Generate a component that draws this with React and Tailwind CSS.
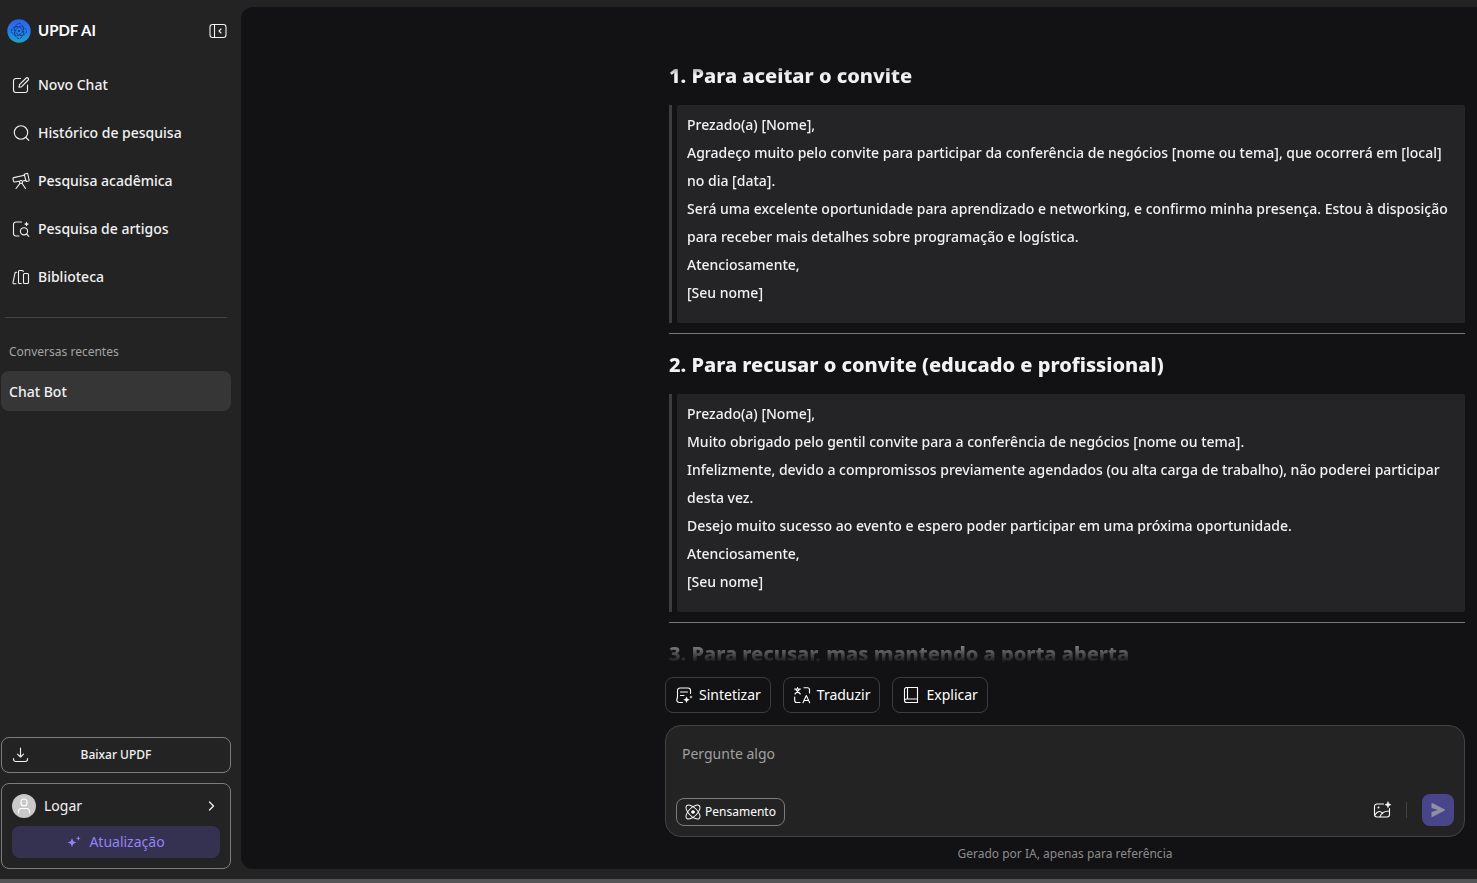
const base = {
  fill: "none",
  stroke: "currentColor",
  strokeWidth: 1.1,
  strokeLinecap: "round",
  strokeLinejoin: "round",
  "aria-hidden": true
};

function Icon({ className = "size-[18px]", children }) {
  return (
    <svg viewBox="0 0 18 18" className={`shrink-0 ${className}`} {...base}>
      {children}
    </svg>
  );
}

function LogoIcon() {
  return (
    <svg viewBox="0 0 24 24" className="size-6 shrink-0" aria-hidden="true">
      <defs>
        <linearGradient id="logo" x1="0.5" y1="0" x2="0.5" y2="1">
          <stop offset="0" stopColor="#2f5fee" />
          <stop offset="0.55" stopColor="#2280ea" />
          <stop offset="1" stopColor="#1fa3c4" />
        </linearGradient>
      </defs>
      <circle cx="12" cy="12" r="11.7" fill="url(#logo)" />
      <g fill="none" stroke="#0b2a6b" strokeWidth="0.8" strokeDasharray="2.4 0.8">
        <ellipse cx="12" cy="12" rx="7.6" ry="4.6" />
        <ellipse cx="12" cy="12" rx="4.6" ry="7.6" />
        <circle cx="12" cy="12" r="3.4" />
      </g>
      <circle cx="12" cy="12" r="0.9" fill="#0b2a6b" />
    </svg>
  );
}

function CollapseIcon() {
  return (
    <Icon>
      <rect x="1" y="2.5" width="16" height="13" rx="2.5" />
      <path d="M5.5 2.5v13M12 7l-2 2 2 2" />
    </Icon>
  );
}

function NewChatIcon() {
  return (
    <Icon>
      <path d="M8.5 2.5H4A2.500 2.500 0 0 0 1.500 5v9A2.500 2.500 0 0 0 4 16.500h9a2.500 2.500 0 0 0 2.500-2.500V9" />
      <path d="M7 11.300l.5-2.700 6.700-6.600a1.200 1.200 0 0 1 1.700 0l.3.3a1.200 1.200 0 0 1 0 1.700L9.700 10.700z" />
    </Icon>
  );
}

function SearchIcon() {
  return (
    <Icon>
      <circle cx="9" cy="8.500" r="6.700" />
      <path d="M14 13.500l2.800 2.800" />
    </Icon>
  );
}

function TelescopeIcon() {
  return (
    <Icon>
      <path d="M12.200 2.300l2.600-.9a.8.8 0 0 1 1 .6l1.300 6a.8.8 0 0 1-.6 1l-2.400.4z" />
      <path d="M12.400 3.300L1.700 5.600a1 1 0 0 0-.7 1.200l.6 2.500a1 1 0 0 0 1.200.7L7 9.200M11 9l2.800-.6" />
      <circle cx="9" cy="10" r="1.500" />
      <path d="M8 11.300L4 16.500M10 11.300l3.500 5.200" />
    </Icon>
  );
}

function ArticleSearchIcon() {
  return (
    <Icon>
      <path d="M9.500 2H4A2.500 2.500 0 0 0 1.500 4.500v9A2.500 2.500 0 0 0 4 16H7" />
      <circle cx="12" cy="11.300" r="3.600" />
      <path d="M14.600 14l2.200 2.300" />
      <path d="M14.500 1.600l.8 1.700 1.800.8-1.800.8-.8 1.700-.8-1.700-1.700-.8 1.700-.8z" fill="currentColor" stroke="none" />
    </Icon>
  );
}

function LibraryIcon() {
  return (
    <Icon>
      <path d="M4.700 4.300H4a1 1 0 0 0-1 .8L1 14.500a1 1 0 0 0 1 1.200h2" />
      <path d="M9.300 15.500H7.500a1 1 0 0 1-1-1V3.500a1 1 0 0 1 1-1h2.800a1 1 0 0 1 1 1" />
      <rect x="11.500" y="5.500" width="5" height="10" rx="1" />
    </Icon>
  );
}

function DownloadIcon() {
  return (
    <Icon>
      <path d="M8.500 2v9M5.500 8.200l3 2.800 3-2.800M1.500 12.500v.8a2.200 2.200 0 0 0 2.200 2.200h9.600a2.200 2.200 0 0 0 2.200-2.200v-.8" />
    </Icon>
  );
}

function SummaryIcon() {
  return (
    <Icon>
      <path d="M7.500 16.500H4.500A2.800 2.800 0 0 1 1.700 14l.8-3V4.500A2.500 2.500 0 0 1 5 2h8a2.500 2.500 0 0 1 2.500 2.500v3M5.500 6h7M5.500 9.500h3.500" />
      <path d="M11.500 10.500l1 2.200 2.200 1-2.200 1-1 2.300-1-2.300-2.200-1 2.200-1zM16 9.500l.5 1.100 1.200.5-1.200.5-.5 1.200-.5-1.200-1.100-.5 1.100-.5z" fill="currentColor" stroke="none" />
    </Icon>
  );
}

function TranslateIcon() {
  return (
    <Icon>
      <path d="M1.500 3h6M4.500 1.500V3M6.300 3.500L2 8M2.800 3.500L7.300 8" />
      <path d="M11 1.700h3.500a2 2 0 0 1 2 2V7M1.700 11v3.500a2 2 0 0 0 2 2H7" />
      <path d="M10 16.700l3.300-7.200 3.400 7.200M11 14.500h4.600" />
    </Icon>
  );
}

function BookIcon() {
  return (
    <Icon>
      <path d="M15.500 1.500H4.500a2 2 0 0 0-2 2v11a2 2 0 0 0 2 2h11zM5.500 1.500V13M2.500 14.700A2 2 0 0 1 4.500 13h11" />
    </Icon>
  );
}

function AtomIcon() {
  return (
    <Icon className="size-4">
      <ellipse cx="9" cy="9" rx="10" ry="4.800" transform="rotate(45 9 9)" />
      <ellipse cx="9" cy="9" rx="10" ry="4.800" transform="rotate(-45 9 9)" />
      <circle cx="9" cy="9" r="1.500" fill="currentColor" />
    </Icon>
  );
}

function ImageIcon() {
  return (
    <Icon>
      <path d="M10.500 3H4a2.500 2.500 0 0 0-2.500 2.500v8A2.500 2.500 0 0 0 4 16h10a2.500 2.500 0 0 0 2.500-2.500V7.500" />
      <path d="M1.800 14c3-4.500 6-4.500 8-1.300M7 15.800c1-3.300 4.500-5.800 9.300-5.800" />
      <circle cx="5.500" cy="6.500" r="1" fill="currentColor" stroke="none" />
      <path d="M15 .800l.9 2 2.100.9-2.100.9-.9 2.100-.9-2.100-2.100-.9 2.100-.9z" fill="currentColor" strokeWidth="0.5" />
    </Icon>
  );
}

const navItems = [
  { label: "Novo Chat", icon: NewChatIcon },
  { label: "Histórico de pesquisa", icon: SearchIcon },
  { label: "Pesquisa acadêmica", icon: TelescopeIcon },
  { label: "Pesquisa de artigos", icon: ArticleSearchIcon },
  { label: "Biblioteca", icon: LibraryIcon }
];

const actions = [
  { label: "Sintetizar", icon: SummaryIcon },
  { label: "Traduzir", icon: TranslateIcon },
  { label: "Explicar", icon: BookIcon }
];

const sections = [
  {
    title: "1. Para aceitar o convite",
    lines: [
      "Prezado(a) [Nome],",
      "Agradeço muito pelo convite para participar da conferência de negócios [nome ou tema], que ocorrerá em [local] no dia [data].",
      "Será uma excelente oportunidade para aprendizado e networking, e confirmo minha presença. Estou à disposição para receber mais detalhes sobre programação e logística.",
      "Atenciosamente,",
      "[Seu nome]"
    ]
  },
  {
    title: "2. Para recusar o convite (educado e profissional)",
    lines: [
      "Prezado(a) [Nome],",
      "Muito obrigado pelo gentil convite para a conferência de negócios [nome ou tema].",
      "Infelizmente, devido a compromissos previamente agendados (ou alta carga de trabalho), não poderei participar desta vez.",
      "Desejo muito sucesso ao evento e espero poder participar em uma próxima oportunidade.",
      "Atenciosamente,",
      "[Seu nome]"
    ]
  },
  { title: "3. Para recusar, mas mantendo a porta aberta", lines: [] }
];

function Sidebar() {
  return (
    <aside className="flex w-[241px] shrink-0 flex-col pr-[10px] pl-px text-sm">
      <div className="flex h-12 items-center justify-between pr-1 pl-[6px]">
        <div className="flex items-center gap-[7px]">
          <LogoIcon />
          <span className="font-[Lato] text-[15px] font-bold text-white">UPDF AI</span>
        </div>
        <button type="button" aria-label="Recolher menu">
          <CollapseIcon />
        </button>
      </div>

      <nav className="mt-[6px] flex flex-col">
        {navItems.map(({ label, icon: NavIcon }) => (
          <a key={label} href="#" className="flex h-12 items-center gap-2 pl-[11px] font-medium">
            <NavIcon />
            {label}
          </a>
        ))}
      </nav>

      <hr className="mx-1 mt-4 border-[#444444]" />
      <h2 className="mt-6 mb-[9px] pl-2 text-xs leading-5 text-[#a3a3a3]">Conversas recentes</h2>
      <a href="#" className="flex h-10 items-center rounded-lg bg-[#363637] pt-px pl-2 font-medium">
        Chat Bot
      </a>

      <div className="mt-auto flex flex-col gap-[10px]">
        <button
          type="button"
          className="grid h-9 grid-cols-[18px_1fr_18px] items-center rounded-lg border border-[#7c7c7c] px-[10px] text-xs font-medium"
        >
          <DownloadIcon />
          Baixar UPDF
        </button>
        <div className="rounded-lg border border-[#7c7c7c] p-[10px]">
          <button type="button" className="flex h-6 w-full items-center gap-2">
            <span className="flex size-6 items-center justify-center rounded-full bg-[#c9c9c9] text-white">
              <Icon>
                <rect x="6" y="2" width="6" height="7" rx="3" />
                <path d="M3.500 16v-1.500a3 3 0 0 1 3-3h5a3 3 0 0 1 3 3V16" />
              </Icon>
            </span>
            Logar
            <Icon className="ml-auto size-[18px]">
              <path d="M7.500 5l4 4-4 4" strokeWidth="1.300" />
            </Icon>
          </button>
          <button
            type="button"
            className="mt-2 flex h-8 w-full items-center justify-center gap-2 rounded-lg bg-[#353150] text-[#9184f5]"
          >
            <svg viewBox="0 0 14 14" className="size-[14px]" fill="currentColor" aria-hidden="true">
              <path d="M5 3l1.300 3.200L9.500 7.500 6.300 8.800 5 12 3.700 8.800.5 7.500l3.200-1.300zM11.300 1l.7 1.700 1.700.7-1.700.7-.7 1.700-.7-1.700-1.700-.7 1.700-.7z" />
            </svg>
            Atualização
          </button>
        </div>
      </div>
    </aside>
  );
}

function Message() {
  return (
    <div className="min-h-0 flex-1 overflow-hidden pt-[6px] pl-1 [mask-image:linear-gradient(to_bottom,transparent,black_20px,black_calc(100%-36px),transparent_calc(100%-2px))]">
      {sections.map(({ title, lines }, index) => (
        <section key={title}>
          {index > 0 && <hr className="mt-[10px] mb-4 border-[#777777]" />}
          <h3 className="mb-[15px] pt-px text-xl leading-7 font-extrabold">{title}</h3>
          {lines.length > 0 && (
            <blockquote className="border-l-3 border-[#3d3d3f] pl-[5px]">
              <div className="rounded-xs bg-[#242326] px-[10px] pt-[6px] pb-4 text-sm leading-7 font-medium">
                {lines.map((line) => (
                  <p key={line}>{line}</p>
                ))}
              </div>
            </blockquote>
          )}
        </section>
      ))}
    </div>
  );
}

function Composer() {
  return (
    <form
      className="mt-3 flex h-28 flex-col rounded-2xl border border-[#434343] bg-[#232324] p-[10px]"
      onSubmit={(event) => event.preventDefault()}
    >
      <textarea
        aria-label="Pergunte algo"
        placeholder="Pergunte algo"
        className="min-h-0 w-full flex-1 resize-none bg-transparent px-[6px] pt-2 text-sm outline-none placeholder:text-[#a0a0a0]"
      />
      <div className="flex items-end">
        <button
          type="button"
          className="flex h-7 items-center gap-1 rounded-lg border border-[#7c7c7c] px-2 text-xs text-white"
        >
          <AtomIcon />
          Pensamento
        </button>
        <button type="button" aria-label="Adicionar imagem" className="mb-[7px] ml-auto text-white">
          <ImageIcon />
        </button>
        <span className="mx-[15px] mb-2 h-4 w-px bg-[#434343]" />
        <button
          type="submit"
          aria-label="Enviar"
          className="flex size-8 items-center justify-center rounded-lg bg-[#48458a] text-[#8f8fa3]"
        >
          <svg viewBox="0 0 16 16" className="size-4" fill="currentColor" aria-hidden="true">
            <path d="M1.500 1.500Q1.500.7 2.300 1L14.800 7.500q.7.500 0 1L2.300 15q-.8.300-.8-.5V10L8 8 1.500 6z" />
          </svg>
        </button>
      </div>
    </form>
  );
}

export default function App() {
  return (
    <div className="flex h-screen flex-col bg-[#232324] pt-[7px] font-['Noto_Sans',sans-serif] text-[#f2f2f2]">
      <div className="flex min-h-0 flex-1">
        <Sidebar />
        <main className="flex min-w-0 flex-1 flex-col rounded-l-xl bg-[#121113] pt-12 pr-3">
          <div className="ml-auto flex min-h-0 w-full max-w-[800px] flex-1 flex-col">
            <Message />
            <div className="mt-3 flex gap-3">
              {actions.map(({ label, icon: ActionIcon }) => (
                <button
                  key={label}
                  type="button"
                  className="flex h-9 items-center gap-[6px] rounded-lg border border-[#3d3d3f] px-[9px] text-sm text-white"
                >
                  <ActionIcon />
                  {label}
                </button>
              ))}
            </div>
            <Composer />
            <p className="pt-[7px] pb-[5px] text-center text-xs leading-5 text-[#8c8c8c]">
              Gerado por IA, apenas para referência
            </p>
          </div>
        </main>
      </div>
      <div className="mt-[10px] h-1 shrink-0 bg-[#545456]" />
    </div>
  );
}
